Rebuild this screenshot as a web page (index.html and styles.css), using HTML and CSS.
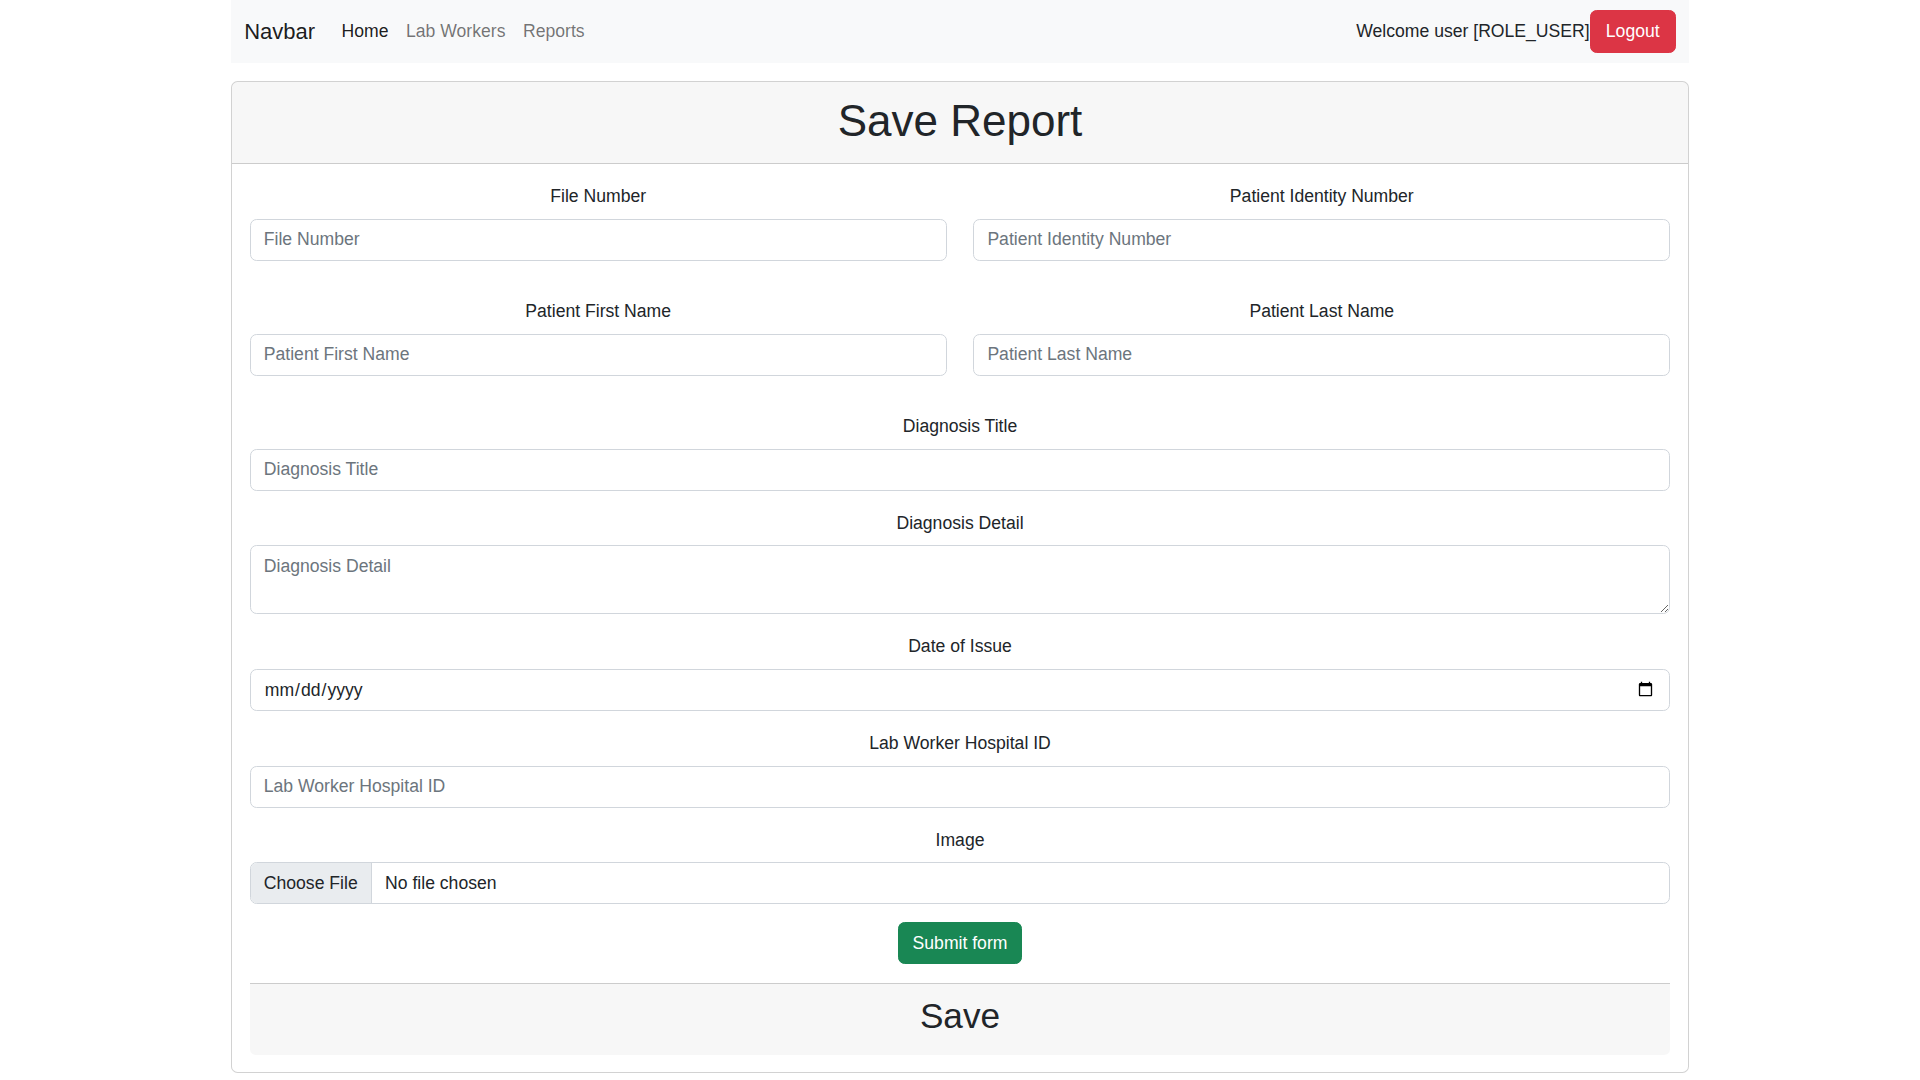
FILE: index.html
```html
<!DOCTYPE html>
<html lang="en">
<head>
<meta charset="utf-8">
<title>Save Report</title>
<link rel="stylesheet" href="styles.css">
</head>
<body>
<main class="page">
  <nav class="navbar">
    <a class="brand" href="#">Navbar</a>
    <ul class="nav">
      <li><a class="nav-link active" href="#">Home</a></li>
      <li><a class="nav-link" href="#">Lab Workers</a></li>
      <li><a class="nav-link" href="#">Reports</a></li>
    </ul>
    <div class="nav-right">
      <span class="welcome">Welcome user [ROLE_USER]</span>
      <button class="btn btn-danger btn-logout" type="button">Logout</button>
    </div>
  </nav>

  <section class="card">
    <header class="card-header">
      <h1>Save Report</h1>
    </header>
    <form class="card-body">
      <div class="row">
        <div class="field">
          <label class="form-label" for="fileNumber">File Number</label>
          <input class="form-control" id="fileNumber" type="text" placeholder="File Number">
        </div>
        <div class="field">
          <label class="form-label" for="patientId">Patient Identity Number</label>
          <input class="form-control" id="patientId" type="text" placeholder="Patient Identity Number">
        </div>
      </div>
      <div class="row">
        <div class="field">
          <label class="form-label" for="firstName">Patient First Name</label>
          <input class="form-control" id="firstName" type="text" placeholder="Patient First Name">
        </div>
        <div class="field">
          <label class="form-label" for="lastName">Patient Last Name</label>
          <input class="form-control" id="lastName" type="text" placeholder="Patient Last Name">
        </div>
      </div>
      <div class="field">
        <label class="form-label" for="diagTitle">Diagnosis Title</label>
        <input class="form-control" id="diagTitle" type="text" placeholder="Diagnosis Title">
      </div>
      <div class="field">
        <label class="form-label" for="diagDetail">Diagnosis Detail</label>
        <textarea class="form-control" id="diagDetail" rows="2" placeholder="Diagnosis Detail"></textarea>
      </div>
      <div class="field">
        <label class="form-label" for="issueDate">Date of Issue</label>
        <input class="form-control" id="issueDate" type="date">
      </div>
      <div class="field">
        <label class="form-label" for="hospitalId">Lab Worker Hospital ID</label>
        <input class="form-control" id="hospitalId" type="text" placeholder="Lab Worker Hospital ID">
      </div>
      <div class="field">
        <label class="form-label" for="image">Image</label>
        <input class="form-control" id="image" type="file">
      </div>
      <div class="submit-wrap">
        <button class="btn btn-success" type="submit">Submit form</button>
      </div>
      <footer class="card-footer">
        <h2>Save</h2>
      </footer>
    </form>
  </section>
</main>
</body>
</html>
```

FILE: styles.css
```css
* {
  box-sizing: border-box;
}

html, body {
  margin: 0;
  padding: 0;
  background: #fff;
}

body {
  font-family: "Liberation Sans", Arial, sans-serif;
  font-size: 17.6px;
  line-height: 1.5;
  color: #212529;
}

.page {
  width: 1458px;
  margin: 0 auto;
}

/* Navbar */
.navbar {
  display: flex;
  align-items: center;
  background: #f8f9fa;
  padding: 9.4px 13.2px;
}

.brand {
  font-size: 22px;
  line-height: 33px;
  padding: 5.5px 0;
  margin-right: 17.6px;
  color: rgba(0, 0, 0, 0.9);
  text-decoration: none;
}

.nav {
  display: flex;
  list-style: none;
  margin: 0;
  padding: 0;
}

.nav-link {
  display: block;
  padding: 8.8px 8.8px;
  color: rgba(0, 0, 0, 0.55);
  text-decoration: none;
}

.nav-link.active {
  color: rgba(0, 0, 0, 0.9);
}

.nav-right {
  margin-left: auto;
  display: flex;
  align-items: center;
}

.welcome {
  color: #212529;
}

.btn {
  display: inline-block;
  font-family: inherit;
  font-size: 17.6px;
  line-height: 26.4px;
  padding: 6.6px 13.2px;
  border: 1px solid transparent;
  border-radius: 6.6px;
  color: #fff;
  cursor: pointer;
}

.btn-logout {
  height: 42.6px;
  padding-left: 15.2px;
  padding-right: 15.2px;
}

.btn-danger {
  background: #dc3545;
  border-color: #dc3545;
}

.btn-success {
  background: #198754;
  border-color: #198754;
  height: 42px;
}

/* Card */
.card {
  margin-top: 18.3px;
  border: 1px solid rgba(0, 0, 0, 0.175);
  border-radius: 6.6px;
  background: #fff;
}

.card-header {
  background: rgba(0, 0, 0, 0.03);
  border-bottom: 1px solid rgba(0, 0, 0, 0.175);
  border-radius: 5.6px 5.6px 0 0;
  padding: 13px 17.6px 15.5px;
  text-align: center;
}

.card-header h1 {
  margin: 0;
  font-size: 44px;
  font-weight: 500;
  line-height: 52.8px;
}

.card-body {
  padding: 17.6px;
}

.row {
  display: grid;
  grid-template-columns: 1fr 1fr;
  column-gap: 26.4px;
  margin-bottom: 18.2px;
}

.field {
  margin-bottom: 18.1px;
}

.form-label {
  display: block;
  text-align: center;
  line-height: 26.4px;
  height: 27.4px;
  padding-top: 1px;
  margin-bottom: 9.3px;
}

.form-control {
  display: block;
  width: 100%;
  height: 42px;
  font-family: inherit;
  font-size: 17.6px;
  line-height: 26.4px;
  color: #212529;
  background: #fff;
  padding: 6.6px 13.2px;
  border: 1px solid #d1d6dc;
  border-radius: 6.6px;
  margin: 0;
}

.form-control::placeholder {
  color: #6c757d;
  opacity: 1;
}

textarea.form-control {
  height: 68.6px;
  resize: vertical;
}

.form-control::-webkit-date-and-time-value {
  min-width: 85px;
  height: 1.5em;
  margin: 0;
  text-align: left;
}

.form-control::-webkit-datetime-edit {
  display: block;
  padding: 0;
}

.form-control[type="file"] {
  overflow: hidden;
}

.form-control::file-selector-button {
  font-family: inherit;
  font-size: 17.6px;
  line-height: 26.4px;
  padding: 6.6px 13.2px;
  margin: -6.6px -13.2px;
  margin-inline-end: 13.2px;
  color: #212529;
  background: #e9ecef;
  border: 0 solid #d1d6dc;
  border-inline-end-width: 1px;
  border-radius: 0;
}

.submit-wrap {
  text-align: center;
  margin-bottom: 18.2px;
}

.card-footer {
  background: rgba(0, 0, 0, 0.03);
  border-top: 1px solid rgba(0, 0, 0, 0.175);
  border-radius: 0 0 5.6px 5.6px;
  padding: 11.3px 17.6px 17.5px;
  text-align: center;
}

.card-footer h2 {
  margin: 0;
  font-size: 35.2px;
  font-weight: 500;
  line-height: 42.2px;
}
```
